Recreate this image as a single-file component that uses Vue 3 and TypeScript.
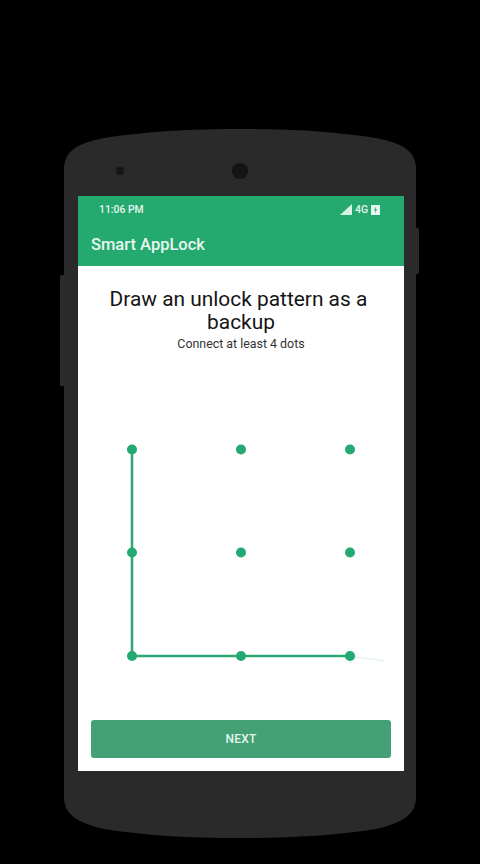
<script setup lang="ts">
const xs = [54, 163, 272]
const ys = [52.5, 155.5, 259]
const dots = ys.flatMap((y) => xs.map((x) => ({ x, y })))
</script>

<template>
  <div class="page">
    <div class="device">
      <svg class="shell" width="360" height="714" viewBox="0 0 360 714" aria-hidden="true">
        <rect x="354" y="99" width="5" height="46" rx="1.5" fill="#2a2a2a" />
        <rect x="0" y="146" width="6" height="111" rx="1.5" fill="#2c2c2c" />
        <path
          d="M4 40 C4 22 18 14 44 9 C90 2 130 0 180 0 C230 0 270 2 316 9 C342 14 356 22 356 40 L356 668 C356 686 342 694 316 700 C270 707 230 709 180 709 C130 709 90 707 44 700 C18 694 4 686 4 668 Z"
          fill="#2a2a2a"
        />
        <circle cx="60" cy="42" r="4" fill="#161616" />
        <circle cx="180" cy="42" r="8" fill="#141414" />
      </svg>
      <div class="screen">
        <header class="appbar">
          <div class="status">
            <span class="time">11:06 PM</span>
            <div class="indicators">
              <svg width="12" height="11" viewBox="0 0 12 11" aria-hidden="true">
                <path d="M12 0 V11 H0 Z" fill="#d8f2e4" />
              </svg>
              <span class="net">4G</span>
              <svg width="9" height="11" viewBox="0 0 9 11" aria-hidden="true">
                <path d="M0 1 H9 V11 H0 Z" fill="#e6f6ee" />
                <path d="M5 2.5 L3 6.5 H4.3 L4 9 L6 5.3 H4.7 Z" fill="#24a96f" />
              </svg>
            </div>
          </div>
          <div class="toolbar">Smart AppLock</div>
        </header>
        <main class="content">
          <h1 class="title">Draw an unlock pattern as a&nbsp;<br />backup</h1>
          <p class="subtitle">Connect at least 4 dots</p>
          <div class="pattern">
            <svg width="326" height="320" viewBox="0 0 326 320" role="img" aria-label="Unlock pattern">
              <circle cx="272" cy="259" r="8" fill="#f4faf7" />
              <path d="M272 259 L306 264" stroke="#edf5f1" stroke-width="2" fill="none" />
              <path d="M54 52.5 V259 H272" stroke="#2ba875" stroke-width="2.5" fill="none" />
              <circle v-for="(d, i) in dots" :key="i" :cx="d.x" :cy="d.y" r="5" fill="#24a972" />
            </svg>
          </div>
          <button class="next" type="button">NEXT</button>
        </main>
      </div>
    </div>
  </div>
</template>

<style>
html,
body {
  margin: 0;
  background: #000;
}
</style>

<style scoped>
.page {
  width: 480px;
  height: 864px;
  background: #000;
  overflow: hidden;
  display: flex;
  justify-content: center;
  padding: 129px 0 0 0;
  box-sizing: border-box;
  font-family: Roboto, "Liberation Sans", sans-serif;
}
.device {
  position: relative;
  width: 352px;
  height: 711px;
  padding: 67px 12px 0 14px;
  box-sizing: border-box;
}
.shell {
  position: absolute;
  left: -4px;
  top: 0;
}
.screen {
  position: relative;
  width: 326px;
  height: 575px;
  background: #fff;
  display: flex;
  flex-direction: column;
}
.appbar {
  background: #24a96f;
  color: #e8f7ef;
  height: 69.5px;
  flex: none;
}
.status {
  height: 27px;
  padding: 0 24px 0 21px;
  display: flex;
  align-items: center;
  justify-content: space-between;
  font-size: 10.4px;
  font-weight: 500;
}
.indicators {
  display: flex;
  align-items: center;
  gap: 3px;
}
.net {
  font-size: 10.4px;
}
.toolbar {
  height: 42px;
  padding-left: 13px;
  display: flex;
  align-items: center;
  font-size: 16.5px;
  font-weight: 500;
}
.content {
  flex: 1;
  display: flex;
  flex-direction: column;
  align-items: center;
  min-height: 0;
}
.title {
  margin: 22px 0 0;
  font-size: 20.9px;
  line-height: 23px;
  font-weight: 400;
  color: #151515;
  text-align: center;
}
.subtitle {
  margin: 2px 0 0;
  font-size: 12.4px;
  line-height: 15px;
  color: #333;
}
.pattern {
  flex: 1;
  align-self: stretch;
  padding-top: 46px;
  min-height: 0;
}
.pattern svg {
  display: block;
}
.next {
  flex: none;
  width: 300px;
  height: 37.5px;
  margin-bottom: 13.5px;
  border: none;
  border-radius: 3px;
  background: #44a176;
  color: #e3f6ec;
  font-family: inherit;
  font-size: 12px;
  font-weight: 500;
  letter-spacing: 0.2px;
}
</style>
